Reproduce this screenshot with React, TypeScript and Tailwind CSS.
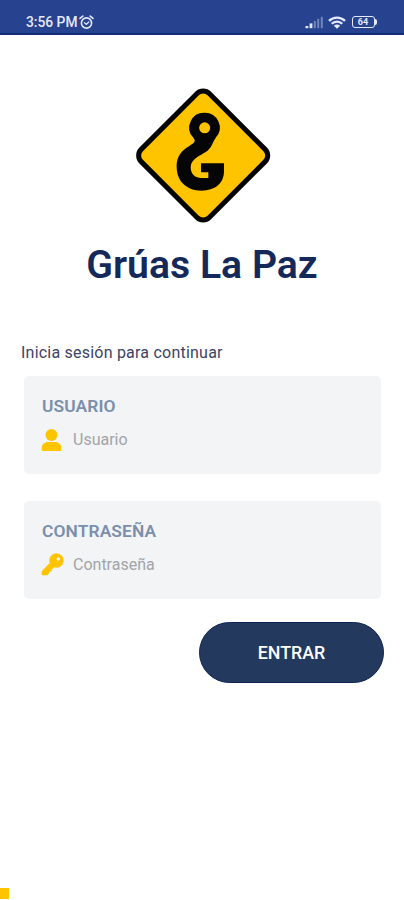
import { useState } from 'react';
import type { ReactNode } from 'react';

interface FieldProps {
  label: string;
  placeholder: string;
  type: string;
  icon: ReactNode;
  value: string;
  onChange: (value: string) => void;
}

function AlarmIcon() {
  return (
    <svg className="w-[15px] h-[15px]" viewBox="0 0 15 15" fill="none" stroke="currentColor" strokeLinecap="round">
      <circle cx="7.5" cy="8" r="5.1" strokeWidth="1.6" />
      <path d="M1 3.4L3.8 1.1M14 3.4L11.2 1.1" strokeWidth="1.6" />
      <path d="M5.4 7.6L7.3 9.4L9.8 7" strokeWidth="1.3" />
    </svg>
  );
}

function SignalIcon() {
  return (
    <svg className="w-[19px] h-[13px]" viewBox="0 0 19 13" fill="currentColor">
      <rect x="0.5" y="10" width="2.8" height="2.2" />
      <rect x="4.6" y="7.4" width="2.8" height="4.8" />
      <g opacity="0.4">
        <rect x="8.8" y="5" width="2" height="7.2" />
        <rect x="12.2" y="2.8" width="2" height="9.4" />
        <rect x="15.8" y="0.8" width="2" height="11.4" />
      </g>
    </svg>
  );
}

function WifiIcon() {
  return (
    <svg className="w-[18px] h-[13px]" viewBox="0 0 18 13" fill="none" stroke="currentColor" strokeWidth="2.3">
      <path d="M1 4.8C5.5 0.5 12.5 0.5 17 4.8" />
      <path d="M3.7 7.8C6.7 4.8 11.3 4.8 14.3 7.8" />
      <path d="M9 12.8L5.8 9.7C7.7 8.1 10.3 8.1 12.2 9.7Z" fill="currentColor" stroke="none" />
    </svg>
  );
}

function Battery({ level }: { level: number }) {
  return (
    <div className="flex items-center">
      <div className="flex h-[12px] w-[23px] items-center justify-center rounded-[3px] border-[1.5px] border-[#e4e9fb] text-[9px] leading-none font-bold">
        {level}
      </div>
      <div className="h-[6px] w-[2.5px] rounded-r-full bg-[#e4e9fb]" />
    </div>
  );
}

function UserIcon() {
  return (
    <svg className="-ml-px h-[22px] w-[22px]" viewBox="0 0 22 22" fill="currentColor">
      <circle cx="10.5" cy="6" r="6" />
      <path d="M7 13H14C17.500 13 20.300 15.500 20.300 19V20.500Q20.300 22 18.800 22H2.200Q0.700 22 0.700 20.500V19C0.700 15.500 3.500 13 7 13Z" />
    </svg>
  );
}

function KeyIcon() {
  return (
    <svg className="-ml-px h-[23px] w-[23px]" viewBox="0 0 23 23" fill="currentColor">
      <path
        fillRule="evenodd"
        d="M15.300 0.300A7.200 7.200 0 1 1 13 14.300L10.700 16.500V18.600H8.100V20.600L6.300 22.300H1.800Q0.700 22.300 0.700 21.200V18.300L8.700 10A7.200 7.200 0 0 1 15.300 0.300ZM17.300 4.200A1.700 1.700 0 1 0 17.300 7.600A1.700 1.700 0 1 0 17.300 4.200Z"
      />
    </svg>
  );
}

function Logo() {
  return (
    <svg className="h-[150px] w-[155px]" viewBox="0 0 465 450">
      <rect
        x="90"
        y="82"
        width="289"
        height="289"
        rx="26"
        fill="#ffc400"
        stroke="#050505"
        strokeWidth="15"
        transform="rotate(45 234.5 226.5)"
      />
      <path
        fill="#050505"
        fillRule="evenodd"
        d="M239 98A44.5 44.5 0 0 1 273 172C261 190 262 200 247 213C228 226 197 236 197 262C197 283 211 294 229 294H250V277H228V250H297V274C297 311 269 332 230 332C184 332 155 303 155 261C155 218 181 206 202 192C210 186 212 182 204 172A44.5 44.5 0 0 1 239 98ZM239 127A16.5 16.5 0 1 0 239 160A16.5 16.5 0 1 0 239 127Z"
      />
    </svg>
  );
}

function Field({ label, placeholder, type, icon, value, onChange }: FieldProps) {
  return (
    <label className="block h-[98px] rounded-[5px] bg-[#f2f4f6] px-[18px] pt-[20px]">
      <span className="block text-[17.4px] leading-[21px] font-semibold tracking-[0.1px] text-[#7b8fab]">{label}</span>
      <span className="mt-[11px] flex h-[24px] items-center">
        <span className="flex w-[31px] text-[#ffc400]">{icon}</span>
        <input
          type={type}
          value={value}
          placeholder={placeholder}
          onChange={e => onChange(e.target.value)}
          className="min-w-0 flex-1 bg-transparent text-[16px] text-[#5b6470] outline-none placeholder:text-[#a2a4a7]"
        />
      </span>
    </label>
  );
}

export default function App() {
  const [user, setUser] = useState('');
  const [password, setPassword] = useState('');

  return (
    <div className="flex h-[900px] w-[404px] flex-col overflow-hidden bg-white font-['Roboto',sans-serif]">
      {/* Status bar */}
      <header className="flex h-[35px] shrink-0 items-center justify-between border-b-2 border-[#152c78] bg-[#274390] pt-[11px] pr-[27px] pl-[26px] text-[#e4e9fb]">
        <div className="flex items-center gap-[2px]">
          <span className="text-[13.8px] leading-[20px] font-medium">3:56 PM</span>
          <AlarmIcon />
        </div>
        <div className="flex items-center gap-[4px]">
          <SignalIcon />
          <WifiIcon />
          <div className="ml-[2px]">
            <Battery level={64} />
          </div>
        </div>
      </header>

      {/* Brand */}
      <div className="flex flex-col items-center pt-[45px]">
        <Logo />
        <h1 className="mt-[11px] text-[39.2px] leading-[48px] font-semibold whitespace-nowrap text-[#14295a]">
          Grúas La Paz
        </h1>
      </div>

      {/* Login form */}
      <form className="flex flex-col pt-[54px]" onSubmit={e => e.preventDefault()}>
        <p className="pl-[21px] text-[16px] leading-[20px] tracking-[0.22px] text-[#3c4364]">
          Inicia sesión para continuar
        </p>
        <div className="mt-[13px] flex flex-col gap-[26.5px] pr-[23px] pl-[24px]">
          <Field
            label="USUARIO"
            placeholder="Usuario"
            type="text"
            icon={<UserIcon />}
            value={user}
            onChange={setUser}
          />
          <Field
            label="CONTRASEÑA"
            placeholder="Contraseña"
            type="password"
            icon={<KeyIcon />}
            value={password}
            onChange={setPassword}
          />
        </div>
        <button
          type="submit"
          className="mt-[23.5px] mr-[20px] h-[61px] w-[185px] self-end rounded-full border border-[#0e2352] bg-[#233a5e] pt-px text-[17.8px] font-medium text-white"
        >
          ENTRAR
        </button>
      </form>

      <div className="mt-auto mb-[1px] h-[11px] w-[9px] bg-[#ffc400]" />
    </div>
  );
}
